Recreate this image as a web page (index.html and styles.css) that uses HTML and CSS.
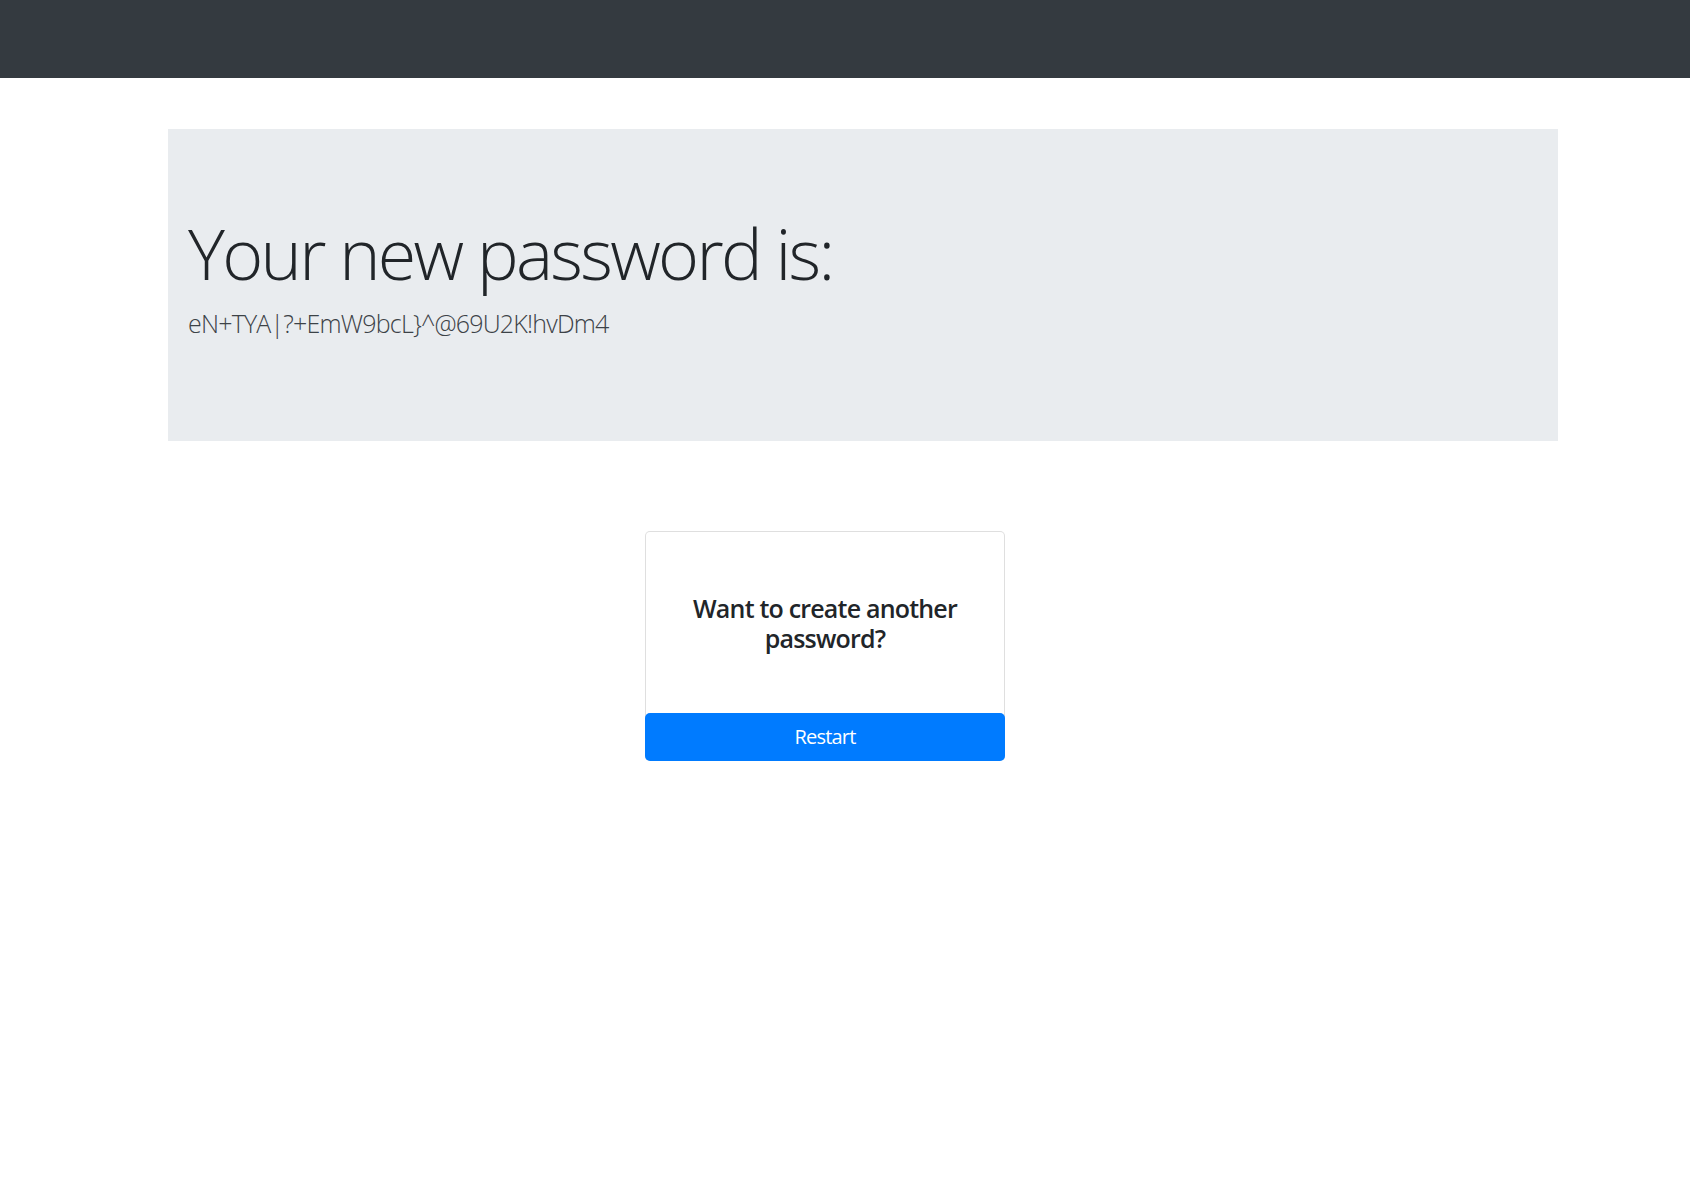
FILE: index.html
```html
<!DOCTYPE html>
<html lang="en">
<head>
<meta charset="utf-8">
<title>Password Generator</title>
<link rel="stylesheet" href="styles.css">
</head>
<body>
<nav class="navbar"></nav>
<main class="page">
  <section class="jumbotron">
    <h1 class="display">Your new password is:</h1>
    <p class="lead">eN+TYA|?+EmW9bcL}^@69U2K!hvDm4</p>
  </section>
  <div class="card-row">
    <div class="card">
      <div class="card-body">
        <h5 class="card-title">Want to create another password?</h5>
      </div>
      <button class="btn" type="button">Restart</button>
    </div>
  </div>
</main>
</body>
</html>
```
FILE: styles.css
```css
* { box-sizing: border-box; }
html, body {
  margin: 0;
  padding: 0;
  background: #fff;
  font-family: "Open Sans", "Noto Sans", sans-serif;
  color: #212529;
}
.navbar {
  height: 78px;
  background: #343a40;
}
.page {
  width: 1390px;
  margin-left: 168px;
}
.jumbotron {
  margin-top: 51px;
  background: #e9ecef;
  padding: 82px 20px 98px 20px;
}
.display {
  margin: 0 0 10px 0;
  font-size: 70px;
  line-height: 84px;
  font-weight: 300;
  letter-spacing: -2.7px;
  color: #212529;
}
.lead {
  margin: 0;
  font-size: 25px;
  line-height: 37.5px;
  font-weight: 300;
  letter-spacing: -0.8px;
  color: #3c4247;
}
.card-row {
  display: flex;
  padding-left: 477px;
  margin-top: 90px;
}
.card {
  width: 360px;
  border: 1px solid rgba(0, 0, 0, 0.125);
  border-radius: 5px;
  display: flex;
  flex-direction: column;
  background: #fff;
}
.card-body {
  padding: 61px 20px 60px 20px;
  text-align: center;
}
.card-title {
  margin: 0;
  font-size: 25px;
  line-height: 30px;
  font-weight: 600;
  letter-spacing: -0.8px;
  color: #212529;
}
.btn {
  margin: 0 -1px -1px -1px;
  height: 48px;
  border: none;
  border-radius: 5px;
  background: #007bff;
  color: #fff;
  font-family: "Open Sans", "Noto Sans", sans-serif;
  font-size: 20px;
  font-weight: 400;
  letter-spacing: -0.8px;
  cursor: pointer;
}
```
